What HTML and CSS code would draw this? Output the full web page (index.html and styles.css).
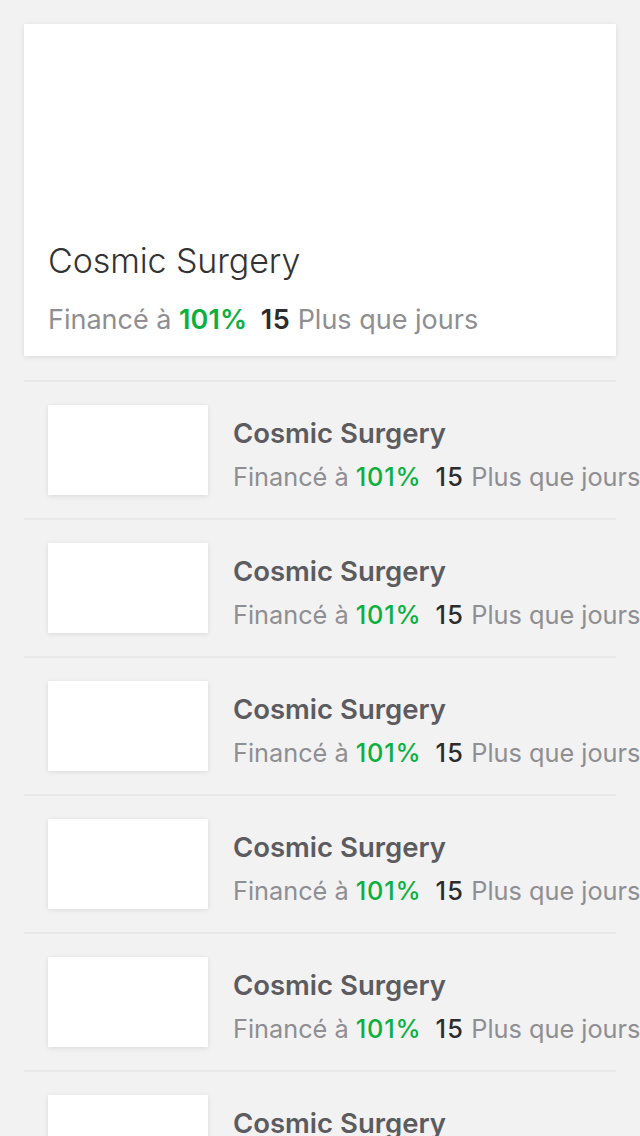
FILE: index.html
```html
<!DOCTYPE html>
<html lang="fr">
<head>
<meta charset="utf-8">
<title>Projets</title>
<link rel="stylesheet" href="styles.css">
</head>
<body>
<main class="page">
  <article class="hero">
    <div class="hero-media"></div>
    <h1 class="hero-title">Cosmic Surgery</h1>
    <p class="meta hero-meta">Financé à <span class="pct">101%</span> <span class="days">15</span> Plus que jours</p>
  </article>
  <ul class="list">
    <li class="row"><div class="thumb"></div><div class="info"><h2 class="row-title">Cosmic Surgery</h2><p class="meta">Financé à <span class="pct">101%</span> <span class="days">15</span> Plus que jours</p></div></li>
    <li class="row"><div class="thumb"></div><div class="info"><h2 class="row-title">Cosmic Surgery</h2><p class="meta">Financé à <span class="pct">101%</span> <span class="days">15</span> Plus que jours</p></div></li>
    <li class="row"><div class="thumb"></div><div class="info"><h2 class="row-title">Cosmic Surgery</h2><p class="meta">Financé à <span class="pct">101%</span> <span class="days">15</span> Plus que jours</p></div></li>
    <li class="row"><div class="thumb"></div><div class="info"><h2 class="row-title">Cosmic Surgery</h2><p class="meta">Financé à <span class="pct">101%</span> <span class="days">15</span> Plus que jours</p></div></li>
    <li class="row"><div class="thumb"></div><div class="info"><h2 class="row-title">Cosmic Surgery</h2><p class="meta">Financé à <span class="pct">101%</span> <span class="days">15</span> Plus que jours</p></div></li>
    <li class="row"><div class="thumb"></div><div class="info"><h2 class="row-title">Cosmic Surgery</h2><p class="meta">Financé à <span class="pct">101%</span> <span class="days">15</span> Plus que jours</p></div></li>
  </ul>
</main>
</body>
</html>
```
FILE: styles.css
```css
html, body {
  margin: 0;
  padding: 0;
  background: #f2f2f2;
  overflow: hidden;
  height: 1136px;
}
body {
  font-family: Inter, "Noto Sans", "Liberation Sans", sans-serif;
  -webkit-font-smoothing: antialiased;
}
.page {
  padding: 24px 24px 0;
}
.hero {
  background: #fff;
  height: 332px;
  box-sizing: border-box;
  padding: 0 24px;
  display: flex;
  flex-direction: column;
  box-shadow: 0 1px 5px rgba(0, 0, 0, 0.10);
}
.hero-media {
  flex: 1;
}
.hero-title {
  margin: 0;
  font-weight: 300;
  font-size: 34px;
  line-height: 40px;
  color: #333;
  letter-spacing: -0.1px;
}
.meta {
  margin: 0;
  font-size: 25.3px;
  line-height: 32px;
  color: #8e8e93;
  white-space: nowrap;
  font-weight: 400;
}
.hero-meta {
  font-size: 27px;
  margin-top: 23px;
  margin-bottom: 20px;
}
.pct {
  color: #0bb03f;
  font-weight: 600;
  letter-spacing: 0.1px;
  margin-right: 6px;
}
.days {
  color: #2c2c2e;
  font-weight: 600;
  letter-spacing: 0.4px;
}
.list {
  list-style: none;
  margin: 24px 0 0;
  padding: 0;
}
.row {
  display: flex;
  align-items: flex-start;
  border-top: 2px solid #e9e9e9;
  padding: 23px 0 23px 24px;
  gap: 25px;
  box-sizing: border-box;
  height: 138px;
}
.thumb {
  flex: none;
  width: 160px;
  height: 90px;
  background: #fff;
  box-shadow: 0 1px 5px rgba(0, 0, 0, 0.10);
}
.info {
  padding-top: 12px;
  white-space: nowrap;
}
.row-title {
  margin: 0;
  font-size: 27.5px;
  line-height: 32px;
  font-weight: 600;
  color: #5b5b60;
}
.row .meta {
  margin-top: 12px;
}
.row .pct {
  font-weight: 500;
  letter-spacing: 0.8px;
  margin-right: 7px;
}
.row .days {
  font-weight: 500;
  letter-spacing: 1.2px;
}
```
